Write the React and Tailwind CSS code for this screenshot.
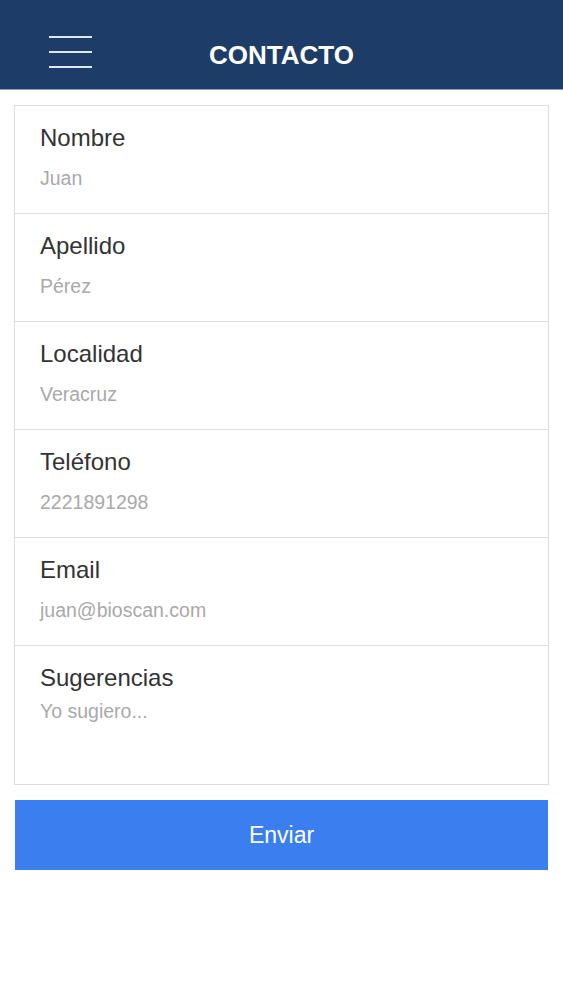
import React from "react";

const fields = [
  { label: "Nombre", value: "Juan" },
  { label: "Apellido", value: "Pérez" },
  { label: "Localidad", value: "Veracruz" },
  { label: "Teléfono", value: "2221891298" },
  { label: "Email", value: "juan@bioscan.com" },
];

export default function App() {
  return (
    <div className="min-h-[1000px] bg-white font-['Liberation_Sans',Arial,sans-serif]">
      <header className="relative flex h-[90px] items-center justify-center bg-[#1e3c68] border-b border-[#8ea3c4]">
        <button className="absolute left-[49px] top-[36px] flex w-[43px] flex-col gap-[13px]">
          <span className="block h-[2px] w-full bg-[#dde8f4]" />
          <span className="block h-[2px] w-full bg-[#dde8f4]" />
          <span className="block h-[2px] w-full bg-[#dde8f4]" />
        </button>
        <h1 className="pt-[22px] text-[26px] font-bold text-white">CONTACTO</h1>
      </header>

      <div className="px-[14px] pt-[15px]">
        <div className="border border-[#dedede]">
          {fields.map((f, i) => (
            <div key={f.label} className={`pl-[25px] pt-[18px] ${i > 0 ? "h-[108px] border-t border-[#dedede]" : "h-[107px]"}`}>
              <div className="text-[24px] leading-[28px] text-[#333]">{f.label}</div>
              <div className="mt-[15px] text-[19.5px] leading-[22px] text-[#a9a9a9]">{f.value}</div>
            </div>
          ))}
          <div className="h-[139px] border-t border-[#dedede] pl-[25px] pt-[18px]">
            <div className="text-[24px] leading-[28px] text-[#333]">Sugerencias</div>
            <div className="mt-[8px] text-[19.5px] leading-[22px] text-[#a9a9a9]">Yo sugiero...</div>
          </div>
        </div>

        <button className="mx-px mt-[15px] flex h-[70px] w-[calc(100%-2px)] items-center justify-center bg-[#3a7ef0] text-[23px] text-white">
          Enviar
        </button>
      </div>
    </div>
  );
}
